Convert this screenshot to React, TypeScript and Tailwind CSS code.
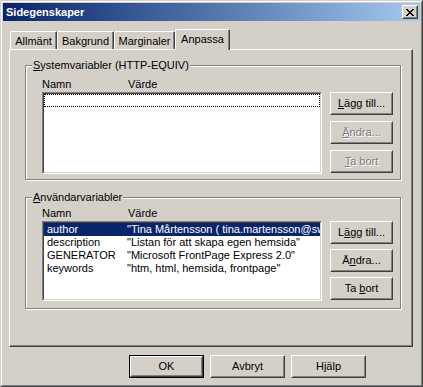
import React from 'react';

const Btn: React.FC<{ children: React.ReactNode; disabled?: boolean; primary?: boolean; w?: string }> = ({
  children,
  disabled,
  primary,
  w = 'w-[63px]',
}) => (
  <div className={`${w} h-[23px] ${primary ? 'border border-black' : ''}`}>
    <div className="h-full border border-t-white border-l-white border-r-[#404040] border-b-[#404040]">
      <div
        className={`h-full border border-t-[#d4d0c8] border-l-[#d4d0c8] border-r-[#808080] border-b-[#808080] flex items-center justify-center leading-[13px] ${
          disabled ? 'text-[#808080] [text-shadow:1px_1px_0_#fff]' : ''
        }`}
      >
        {children}
      </div>
    </div>
  </div>
);

const Tab: React.FC<{ label: string; w: string; active?: boolean }> = ({ label, w, active }) => (
  <div
    className={`${w} ${
      active ? 'h-[21px] -mb-px relative z-10' : 'h-[18px]'
    } bg-[#d4d0c8] border-t border-l border-white border-r border-r-[#404040] rounded-tl-[2px] rounded-tr-[1px] shadow-[inset_-1px_0_0_#808080] flex justify-center pt-[3px] leading-[13px]`}
  >
    {label}
  </div>
);

const ListBox: React.FC<{ h: string; children?: React.ReactNode }> = ({ h, children }) => (
  <div className={`w-[280px] ${h} border border-t-[#808080] border-l-[#808080] border-r-white border-b-white`}>
    <div className="h-full border border-t-[#404040] border-l-[#404040] border-r-[#d4d0c8] border-b-[#d4d0c8] bg-white overflow-hidden">
      {children}
    </div>
  </div>
);

const Group: React.FC<{ label: React.ReactNode; h: string; className?: string; children: React.ReactNode }> = ({
  label,
  h,
  className = '',
  children,
}) => (
  <div
    className={`relative w-[376px] ${h} border border-[#808080] shadow-[inset_1px_1px_0_#fff,1px_1px_0_#fff] ${className}`}
  >
    <span className="absolute left-[6px] top-[-7px] px-px bg-[#d4d0c8] leading-[13px] whitespace-nowrap">{label}</span>
    {children}
  </div>
);

const Header = () => (
  <div className="flex h-[14px] leading-[13px]">
    <span className="w-[86px]">Namn</span>
    <span>Värde</span>
  </div>
);

const rows = [
  ['author', '"Tina Mårtensson  ( tina.martensson@swipnet.se )"'],
  ['description', '"Listan för att skapa egen hemsida"'],
  ['GENERATOR', '"Microsoft FrontPage Express 2.0"'],
  ['keywords', '"htm, html, hemsida, frontpage"'],
];

export default function App() {
  return (
    <div className="w-[423px] h-[387px] bg-[#d4d0c8] border border-t-[#d4d0c8] border-l-[#d4d0c8] border-r-[#404040] border-b-[#404040] font-['Liberation_Sans',Arial,sans-serif] text-[11px] text-black select-none">
      <div className="h-full border border-t-white border-l-white border-r-[#808080] border-b-[#808080] p-px flex flex-col">
        {/* title bar */}
        <div className="h-[18px] shrink-0 bg-gradient-to-r from-[#0a246a] to-[#a6caf0] flex items-center justify-between pl-[3px] pr-[2px]">
          <span className="text-white font-bold leading-[13px]">Sidegenskaper</span>
          <div className="w-[16px] h-[14px] border border-t-white border-l-white border-r-[#404040] border-b-[#404040]">
            <div className="h-full border border-t-[#d4d0c8] border-l-[#d4d0c8] border-r-[#808080] border-b-[#808080] bg-[#d4d0c8] flex items-center justify-center">
              <svg width="8" height="7" viewBox="0 0 8 7" shapeRendering="crispEdges">
                <path
                  fill="#000"
                  d="M0 0h2v1H0zM6 0h2v1H6zM1 1h2v1H1zM5 1h2v1H5zM2 2h4v1H2zM3 3h2v1H3zM2 4h4v1H2zM1 5h2v1H1zM5 5h2v1H5zM0 6h2v1H0zM6 6h2v1H6z"
                />
              </svg>
            </div>
          </div>
        </div>

        {/* tab control */}
        <div className="pl-[6px] pt-[8px]">
          <div className="flex items-end h-[20px] pl-px">
            <Tab label="Allmänt" w="w-[47px]" />
            <Tab label="Bakgrund" w="w-[57px]" />
            <Tab label="Marginaler" w="w-[61px]" />
            <Tab label="Anpassa" w="w-[55px]" active />
          </div>
          <div className="w-[404px] h-[298px] border border-t-white border-l-white border-r-[#404040] border-b-[#404040] shadow-[inset_-1px_-1px_0_#808080] pl-[15px] pt-[15px]">
            <Group
              h="h-[115px]"
              label={
                <>
                  <u>S</u>ystemvariabler (HTTP-EQUIV)
                </>
              }
            >
              <div className="flex gap-[8px] pl-[16px] pt-[12px]">
                <div>
                  <Header />
                  <ListBox h="h-[82px]">
                    <div className="h-[13px] border border-dotted border-black" />
                  </ListBox>
                </div>
                <div className="flex flex-col gap-[6px] pt-[14px]">
                  <Btn>
                    <span>
                      <u>L</u>ägg till...
                    </span>
                  </Btn>
                  <Btn disabled>
                    <span>
                      <u>Ä</u>ndra...
                    </span>
                  </Btn>
                  <Btn disabled>
                    <span>
                      <u>T</u>a bort
                    </span>
                  </Btn>
                </div>
              </div>
            </Group>

            <Group
              h="h-[112px]"
              className="mt-[17px]"
              label={
                <>
                  <u>A</u>nvändarvariabler
                </>
              }
            >
              <div className="flex gap-[8px] pl-[16px] pt-[8px]">
                <div>
                  <div className="h-px" />
                  <Header />
                  <ListBox h="h-[80px]">
                    {rows.map(([n, v], i) => (
                      <div
                        key={n}
                        className={`flex h-[13px] leading-[13px] whitespace-nowrap ${
                          i === 0 ? 'bg-[#0a246a] text-white' : ''
                        }`}
                      >
                        <span className="w-[83px] shrink-0 pl-[3px]">{n}</span>
                        <span>{v}</span>
                      </div>
                    ))}
                  </ListBox>
                </div>
                <div className="flex flex-col gap-[5px] pt-[15px]">
                  <Btn>
                    <span>
                      L<u>ä</u>gg till...
                    </span>
                  </Btn>
                  <Btn>
                    <span>
                      Ä<u>n</u>dra...
                    </span>
                  </Btn>
                  <Btn>
                    <span>
                      Ta <u>b</u>ort
                    </span>
                  </Btn>
                </div>
              </div>
            </Group>
          </div>
        </div>

        {/* dialog buttons */}
        <div className="flex justify-end gap-[6px] pr-[54px] mt-[8px]">
          <Btn primary w="w-[75px]">
            OK
          </Btn>
          <Btn w="w-[75px]">Avbryt</Btn>
          <Btn w="w-[75px]">Hjälp</Btn>
        </div>
      </div>
    </div>
  );
}
